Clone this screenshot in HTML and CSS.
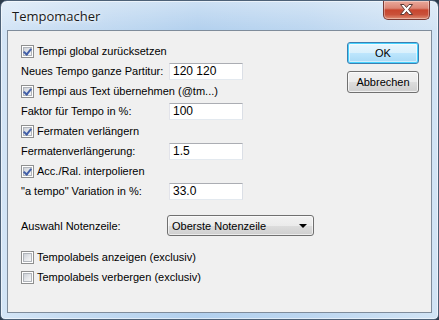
FILE: index.html
```html
<!DOCTYPE html>
<html>
<head>
<meta charset="utf-8">
<link rel="stylesheet" href="styles.css">
</head>
<body>
<div class="window">
  <div class="titlebar">
    <span class="title">Tempomacher</span>
    <div class="close">
      <svg width="47" height="19" viewBox="0 0 47 19">
        <path d="M17.5,4.5 L21,4.5 L23.5,7.5 L26,4.5 L29.5,4.5 L25.5,9.5 L29.5,14.5 L26,14.5 L23.5,11.5 L21,14.5 L17.5,14.5 L21.5,9.5 Z" fill="#ffffff" stroke="#5a3a36" stroke-width="1" stroke-linejoin="round"/>
      </svg>
    </div>
  </div>
  <div class="client">
    <div class="form">
      <label class="row check"><span class="cb checked"></span>Tempi global zurücksetzen</label>
      <div class="row field"><span class="lbl">Neues Tempo ganze Partitur:</span><span class="edit">120 120</span></div>
      <label class="row check"><span class="cb checked"></span>Tempi aus Text übernehmen (@tm...)</label>
      <div class="row field"><span class="lbl">Faktor für Tempo in %:</span><span class="edit">100</span></div>
      <label class="row check"><span class="cb checked"></span>Fermaten verlängern</label>
      <div class="row field"><span class="lbl">Fermatenverlängerung:</span><span class="edit">1.5</span></div>
      <label class="row check"><span class="cb checked"></span>Acc./Ral. interpolieren</label>
      <div class="row field"><span class="lbl">"a tempo" Variation in %:</span><span class="edit">33.0</span></div>
      <div class="row select-row"><span class="lbl sel-lbl">Auswahl Notenzeile:</span><span class="combo"><span>Oberste Notenzeile</span><span class="arrow"></span></span></div>
      <label class="row check first-plain"><span class="cb"></span>Tempolabels anzeigen (exclusiv)</label>
      <label class="row check"><span class="cb"></span>Tempolabels verbergen (exclusiv)</label>
    </div>
    <div class="buttons">
      <div class="btn default">OK</div>
      <div class="btn">Abbrechen</div>
    </div>
  </div>
</div>
</body>
</html>
```

FILE: styles.css
```css
html, body {
  margin: 0;
  padding: 0;
}
body {
  width: 439px;
  height: 320px;
  background: #2c3b4b;
  overflow: hidden;
}
.window {
  box-sizing: border-box;
  width: 439px;
  height: 320px;
  border: 1px solid #4d6177;
  border-radius: 7px 7px 5px 5px;
  background:
    linear-gradient(180deg, rgba(255,255,255,0.35) 0px, rgba(255,255,255,0) 30px),
    linear-gradient(90deg, #d4e5f6 0%, #c6dcf2 15%, #b2d0ee 45%, #bcd6f0 70%, #d2e4f5 100%);
  box-shadow: inset 0 0 0 1px rgba(255,255,255,0.55);
  padding: 0 6px 6px 6px;
  display: flex;
  flex-direction: column;
}
.titlebar {
  height: 29px;
  display: flex;
  align-items: flex-start;
  justify-content: space-between;
}
.title {
  font-family: "Open Sans", "Noto Sans", sans-serif;
  font-size: 13px;
  color: #1a1a1a;
  margin: 6px 0 0 5px;
  text-shadow: 0 0 6px rgba(255,255,255,0.9), 0 0 3px rgba(255,255,255,0.9);
}
.close {
  width: 47px;
  height: 19px;
  margin-right: 2px;
  box-sizing: border-box;
  border: 1px solid #7a3a34;
  border-top: none;
  border-radius: 0 0 5px 5px;
  background: linear-gradient(180deg, #eaa99b 0%, #dc8574 40%, #c8452e 50%, #c9513a 75%, #df8d74 100%);
  box-shadow: inset 0 0 0 1px rgba(255,255,255,0.35);
}
.close svg {
  display: block;
  margin: -1px 0 0 -1px;
}
.client {
  flex: 1;
  border: 1px solid #7f8c9b;
  background: #f0f0f0;
  display: flex;
  justify-content: space-between;
  font-family: "Liberation Sans", Arial, sans-serif;
  font-size: 11px;
  color: #000;
}
.form {
  padding: 10px 0 0 13px;
  display: flex;
  flex-direction: column;
}
.row {
  height: 20px;
  display: flex;
  align-items: center;
  white-space: nowrap;
}
.check {
  gap: 3px;
}
.cb {
  box-sizing: border-box;
  width: 13px;
  height: 13px;
  border: 1px solid #8e8f8f;
  background: #fff;
  position: relative;
  flex: none;
}
.cb::before {
  content: "";
  position: absolute;
  left: 1px;
  top: 1px;
  width: 9px;
  height: 9px;
  box-sizing: border-box;
  border: 1px solid #b0b4ba;
  background: linear-gradient(135deg, #cdd1d7 0%, #e6e8eb 55%, #f6f6f6 100%);
}
.cb.checked::after {
  content: "";
  position: absolute;
  left: 3px;
  top: 1px;
  width: 3px;
  height: 6px;
  border-right: 2px solid #4360a8;
  border-bottom: 2px solid #4360a8;
  transform: rotate(40deg);
  transform-origin: center;
}
.lbl {
  width: 148px;
  flex: none;
}
.edit {
  box-sizing: border-box;
  width: 74px;
  height: 17px;
  border: 1px solid #abadb3;
  border-color: #abadb3 #dbdfe6 #e3e9ef #e2e3ea;
  background: #fff;
  padding: 1px 0 0 3px;
  line-height: 13px;
  font-size: 12px;
}
.select-row {
  height: 21px;
  margin-top: 14px;
}
.sel-lbl {
  width: 146px;
}
.combo {
  box-sizing: border-box;
  width: 147px;
  height: 21px;
  border: 1px solid #707070;
  border-radius: 3px;
  background: linear-gradient(180deg, #f2f2f2 0%, #ebebeb 50%, #dddddd 50%, #cfcfcf 100%);
  box-shadow: inset 0 0 0 1px rgba(255,255,255,0.6);
  display: flex;
  align-items: center;
  justify-content: space-between;
  padding: 0 6px 0 4px;
}
.arrow {
  width: 0;
  height: 0;
  border-left: 4px solid transparent;
  border-right: 4px solid transparent;
  border-top: 4px solid #000;
}
.first-plain {
  margin-top: 11px;
}
.buttons {
  padding: 11px 12px 0 0;
  display: flex;
  flex-direction: column;
  gap: 7px;
}
.btn {
  box-sizing: border-box;
  width: 72px;
  height: 22px;
  border: 1px solid #707070;
  border-radius: 3px;
  background: linear-gradient(180deg, #f2f2f2 0%, #ebebeb 50%, #dddddd 50%, #cfcfcf 100%);
  box-shadow: inset 0 0 0 1px rgba(255,255,255,0.7);
  display: flex;
  align-items: center;
  justify-content: center;
}
.btn.default {
  border-color: #3c7fb1;
  background: linear-gradient(180deg, #eaf6fd 0%, #d9f0fc 50%, #bee6fd 50%, #a7d9f5 100%);
  box-shadow: inset 0 0 0 1px #48d3ff, inset 0 0 0 2px rgba(255,255,255,0.5);
}
```
